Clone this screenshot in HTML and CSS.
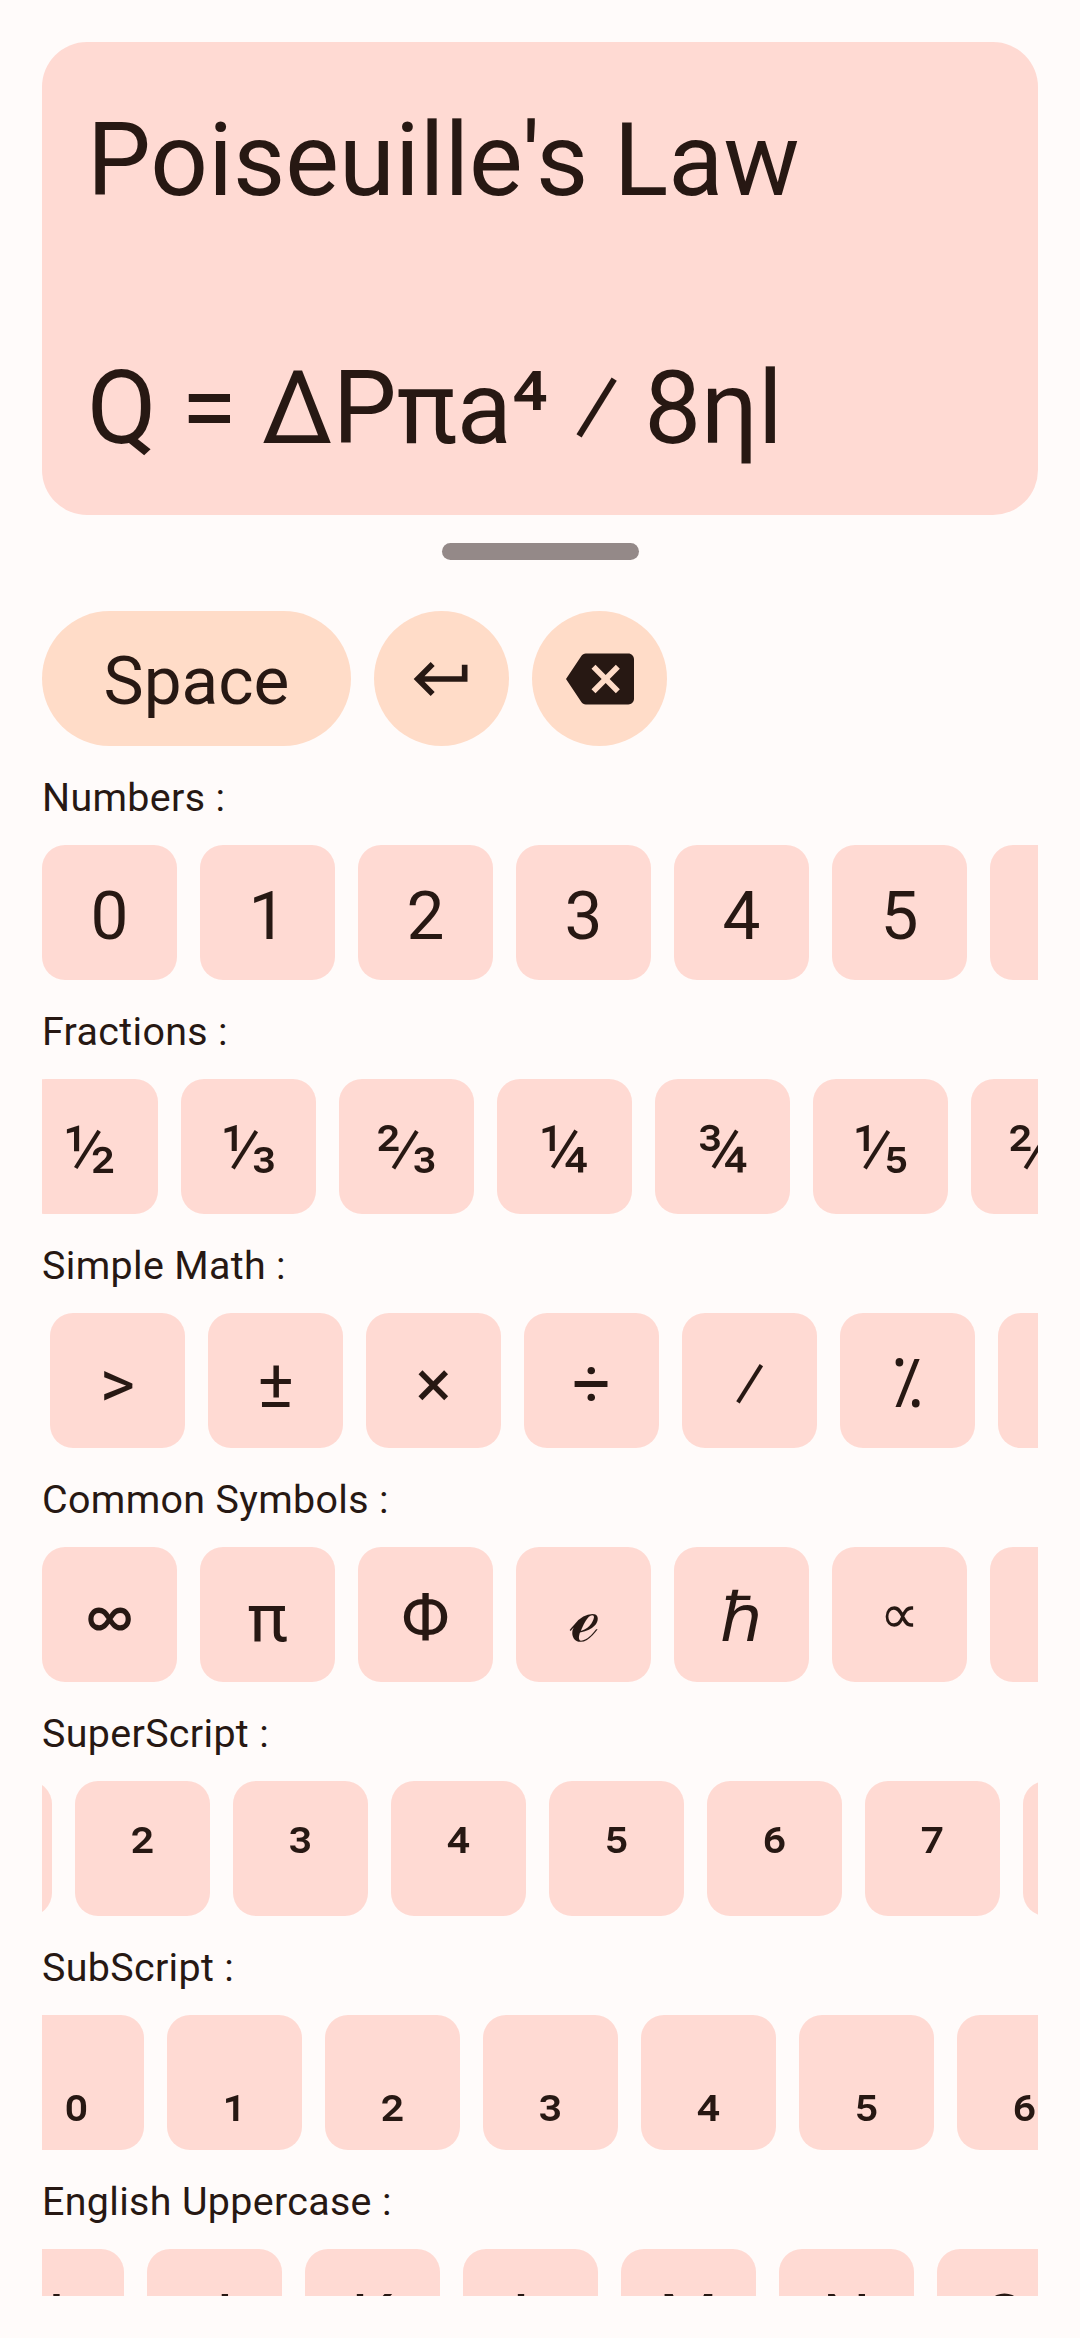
FILE: index.html
```html
<!DOCTYPE html>
<html lang="en">
<head>
<meta charset="utf-8">
<title>Formula Keyboard</title>
<link rel="stylesheet" href="styles.css">
</head>
<body>
<main class="app">
  <section class="display"><p>Poiseuille's Law</p><p class="formula">Q = ΔPπa⁴ ⁄ 8ηl</p></section>
  <div class="handle"></div>
  <div class="tools">
    <button class="space">Space</button>
    <button class="round"><svg viewBox="0 0 24 24"><path d="M19 7v4H5.83l3.58-3.59L8 6l-6 6 6 6 1.41-1.41L5.83 13H21V7z"/></svg></button>
    <button class="round"><svg viewBox="0 0 24 24"><path d="M22 3H7c-.69 0-1.23.35-1.59.88L0 12l5.41 8.11c.36.53.9.89 1.59.89h15c1.1 0 2-.9 2-2V5c0-1.1-.9-2-2-2zm-3 12.59L17.59 17 14 13.41 10.41 17 9 15.59 12.59 12 9 8.41 10.41 7 14 10.59 17.59 7 19 8.41 15.41 12 19 15.59z"/></svg></button>
  </div>
  <h2>Numbers :</h2>
  <div class="row"><span>0</span><span>1</span><span>2</span><span>3</span><span>4</span><span>5</span><span>6</span></div>
  <h2>Fractions :</h2>
  <div class="row fractions"><span>½</span><span><i class="one">¹</i><i class="bar">⁄</i><i class="den">₃</i></span><span><i class="two">²</i><i class="bar">⁄</i><i class="den">₃</i></span><span>¼</span><span>¾</span><span><i class="one">¹</i><i class="bar">⁄</i><i class="den">₅</i></span><span><i class="two">²</i><i class="bar">⁄</i><i class="den">₅</i></span></div>
  <h2>Simple Math :</h2>
  <div class="row math"><span>&gt;</span><span>±</span><span>×</span><span>÷</span><span>⁄</span><span>⁒</span><span>√</span></div>
  <h2>Common Symbols :</h2>
  <div class="row"><span class="infinity">∞</span><span>π</span><span>Φ</span><span>ℯ</span><span>ℏ</span><span class="prop">∝</span><span>∂</span></div>
  <h2>SuperScript :</h2>
  <div class="row super"><span>¹</span><span>²</span><span>³</span><span>⁴</span><span>⁵</span><span>⁶</span><span>⁷</span><span>⁸</span></div>
  <h2>SubScript :</h2>
  <div class="row sub"><span>₀</span><span>₁</span><span>₂</span><span>₃</span><span>₄</span><span>₅</span><span>₆</span></div>
  <h2>English Uppercase :</h2>
  <div class="row upper"><span>I</span><span>J</span><span>K</span><span>L</span><span>M</span><span>N</span><span>O</span></div>
</main>
</body>
</html>
```
FILE: styles.css
```css
* { box-sizing: border-box; }
body { margin: 0; background: #fffbfa; color: #271813; font-family: Roboto, "Noto Sans", "DejaVu Sans", sans-serif; }
.app { height: 2296px; padding: 42px 42px 0; overflow: hidden; }
.display { height: 473px; border-radius: 45px; background: #ffdad3; padding: 57px 45px 0; font-size: 101.25px; line-height: 124px; white-space: nowrap; }
.display p { margin: 0; letter-spacing: .1px; }
.display .formula { padding-top: 124px; letter-spacing: -.2px; }
.handle { width: 197px; height: 17px; margin: 28px auto 51px; border-radius: 9px; background: #948988; }
.tools { display: flex; gap: 23px; height: 135px; }
button { border: 0; padding: 0; background: #ffdcc8; color: inherit; font: 67.5px/135px Roboto, sans-serif; display: flex; align-items: center; justify-content: center; }
button svg { width: 68px; height: 68px; fill: currentColor; }
.space { width: 309px; border-radius: 68px; padding-top: 4px; }
.round { width: 135px; border-radius: 50%; }
h2 { margin: 0; height: 99px; padding-top: 29px; font-size: 39.375px; line-height: 46px; font-weight: 400; letter-spacing: .35px; }
.row { display: flex; gap: 23px; height: 135px; overflow: hidden; }
.row > span { flex: 0 0 135px; height: 135px; border-radius: 23px; background: #ffdad3; text-align: center; font-size: 67.5px; line-height: 141px; }
.row i { font-style: normal; line-height: 0; }
.one { margin-right: -16px; }
.two { margin-right: -11px; }
.bar { margin-right: -8px; }
.den { vertical-align: 12px; }
.row > .infinity { font-family: Lato, sans-serif; font-weight: 500; line-height: 132px; }
.row > .prop { font-size: 55px; line-height: 135px; }
.fractions span:first-child { margin-left: -19px; }
.math span:first-child { margin-left: 8px; }
.super span:first-child { margin-left: -125px; }
.sub span:first-child { margin-left: -33px; }
.upper span:first-child { margin-left: -53px; }
.upper > span { line-height: 139px; }
```
